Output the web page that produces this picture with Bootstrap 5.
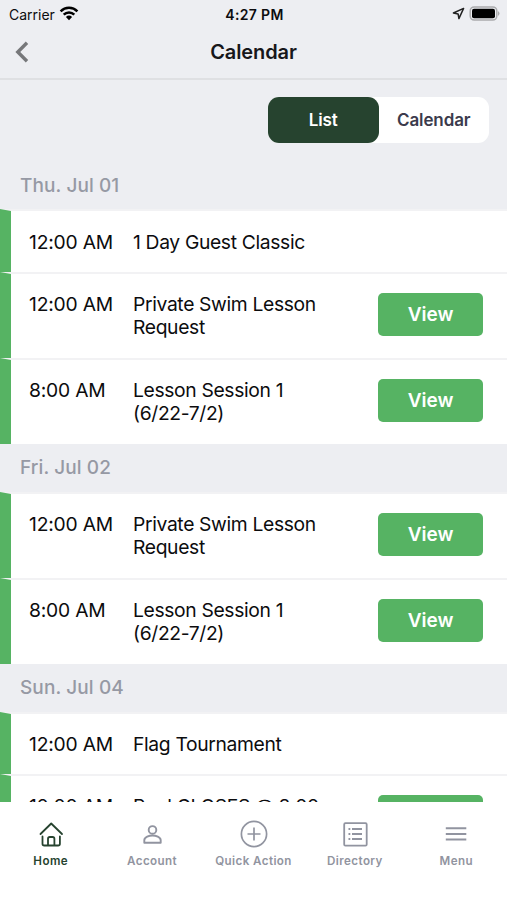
<!DOCTYPE html>
<html lang="en">
<head>
<meta charset="utf-8">
<meta name="viewport" content="width=device-width, initial-scale=1">
<title>Calendar</title>
<link href="https://cdn.jsdelivr.net/npm/bootstrap@5.3.0/dist/css/bootstrap.min.css" rel="stylesheet">
<style>
body{font-family:Inter,"Liberation Sans",sans-serif;background:#edeef2;color:#0c0c0e;height:900px;overflow:hidden}
svg{display:block;fill:none;flex:none}
.status{height:27px;font-size:14px;padding:1px 7px 0 9px}
.status>div{flex:1 1 0}
.status svg{margin-top:-1px}
.clock{font-weight:600;letter-spacing:.35px}
.titlebar{height:53px;border-bottom:2px solid #dfe0e3;padding:0 15px}
.titlebar>div{flex:1 1 0}
.titlebar svg{margin-top:-1px}
.titlebar h1{font-size:20px;font-weight:600;letter-spacing:-.1px;color:#17171a;line-height:48px;padding-bottom:2px}
.switch-wrap{height:80px;padding:17px 18px 0 0}
.switch{width:221px;height:46px;background:#fff;border-radius:11px}
.switch .btn{border:0;border-radius:11px;padding:1px 0 0;font-size:17px;font-weight:600;color:#3b3b4c;letter-spacing:-.1px}
.switch .btn.active{background:#26432f;color:#fff}
.day{height:48px;padding:1px 20px 0;font-size:19px;font-weight:500;color:#9699a4;letter-spacing:.1px}
.day.first{height:49px;padding-top:3px}
.event{height:86px;border-left:11px solid #56b363;border-top:2px solid #f2f2f4;background:#fff;padding:19px 24px 0 18px;font-size:19.3px;line-height:23px;letter-spacing:-.2px}
.event.short{height:62px}
.event.lead-row{height:63px;padding-top:20px}
.event time{width:104px;flex:none}
.event .name{width:205px;letter-spacing:-.35px}
.btn-view{width:105px;height:43px;border-radius:5px;background:#56b363;color:#fff;font-size:19px;font-weight:600;padding:1px 0 0;letter-spacing:0;border:0}
main{height:722px;overflow:hidden}
.tabs{height:98px;background:#fff;padding-top:17px}
.tabs a{flex:1 1 0;color:#9194a0;font-size:11.6px;font-weight:600;letter-spacing:.42px;line-height:16px;text-decoration:none;white-space:nowrap}
.tabs a.active{color:#26432f}
.tabs svg{margin-bottom:4px}
</style>
<script src="https://cdn.jsdelivr.net/npm/bootstrap@5.3.0/dist/js/bootstrap.bundle.min.js"></script>
</head>
<body>
<header>
  <div class="status d-flex align-items-center">
    <div class="d-flex align-items-center"><span class="me-1">Carrier</span>
      <svg width="20" height="15" viewBox="0 0 20 15"><g stroke="#000" stroke-width="2.5"><path d="M1.600 5.300a12 12 0 0 1 16.800 0M4.700 8.700a7.600 7.600 0 0 1 10.600 0"/></g><path fill="#000" d="M6.900 11a4.500 4.500 0 0 1 6.200 0L10 14.200z"/></svg>
    </div>
    <span class="clock">4:27 PM</span>
    <div class="d-flex align-items-center justify-content-end gap-1">
      <svg width="13" height="13" viewBox="0 0 13 13"><path d="M11.600 1.400 1.400 6l4.700.9.8 4.700z" stroke="#222" stroke-width="1.500" stroke-linejoin="round"/></svg>
      <svg width="31" height="15" viewBox="0 0 31 15"><rect x="1.200" y=".9" width="26.600" height="13.200" rx="4" stroke="#aaabad" stroke-width="1.500"/><rect x="3" y="2.700" width="23" height="9.600" rx="2" fill="#000"/><path d="M29 5q3 2.500 0 5z" fill="#aaabad"/></svg>
    </div>
  </div>
  <div class="titlebar d-flex align-items-center">
    <div><svg width="14" height="22" viewBox="0 0 14 22"><path d="m12 1.800-9.200 9.200 9.200 9.200" stroke="#76777a" stroke-width="3.400"/></svg></div>
    <h1 class="m-0">Calendar</h1>
    <div></div>
  </div>
</header>
<main>
  <div class="switch-wrap d-flex justify-content-end">
    <div class="switch d-flex"><button class="btn active w-50">List</button><button class="btn w-50">Calendar</button></div>
  </div>
  <div class="day first d-flex align-items-center">Thu. Jul 01</div>
  <div class="event lead-row d-flex"><time>12:00 AM</time><div class="name">1 Day Guest Classic</div></div>
  <div class="event d-flex"><time>12:00 AM</time><div class="name">Private Swim Lesson Request</div><button class="btn btn-view ms-auto">View</button></div>
  <div class="event d-flex"><time>8:00 AM</time><div class="name">Lesson Session 1 (6/22-7/2)</div><button class="btn btn-view ms-auto">View</button></div>
  <div class="day d-flex align-items-center">Fri. Jul 02</div>
  <div class="event d-flex"><time>12:00 AM</time><div class="name">Private Swim Lesson Request</div><button class="btn btn-view ms-auto">View</button></div>
  <div class="event d-flex"><time>8:00 AM</time><div class="name">Lesson Session 1 (6/22-7/2)</div><button class="btn btn-view ms-auto">View</button></div>
  <div class="day d-flex align-items-center">Sun. Jul 04</div>
  <div class="event short d-flex"><time>12:00 AM</time><div class="name">Flag Tournament</div></div>
  <div class="event d-flex"><time>12:00 AM</time><div class="name">Pool CLOSES @ 8:00</div><button class="btn btn-view ms-auto">View</button></div>
</main>
<nav class="tabs d-flex">
  <a href="#" class="active d-flex flex-column align-items-center"><svg width="30" height="30" viewBox="0 0 30 30" stroke="#26432f" stroke-width="1.800" stroke-linecap="round" stroke-linejoin="round"><path d="M4.500 15 15.200 4.500 26 15M6.500 17.500v7.200q0 1.800 1.800 1.800h13.800q1.800 0 1.800-1.800v-7.200M12 26.300v-6.500q0-1.800 1.800-1.800h2.800q1.800 0 1.800 1.800v6.500"/></svg>Home</a>
  <a href="#" class="d-flex flex-column align-items-center"><svg width="30" height="30" viewBox="0 0 30 30" stroke="#9194a0" stroke-width="1.900"><circle cx="15.500" cy="10.900" r="3.800"/><path stroke-linejoin="round" d="M7.300 23.800v-2.600c0-3.100 5-4.700 8.200-4.700s8.200 1.600 8.200 4.700v2.600z"/></svg>Account</a>
  <a href="#" class="d-flex flex-column align-items-center"><svg width="30" height="30" viewBox="0 0 30 30" stroke="#9194a0" stroke-width="1.700"><circle cx="15" cy="15" r="12.600"/><path d="M15 8.500v13M8.500 15h13"/></svg>Quick Action</a>
  <a href="#" class="d-flex flex-column align-items-center"><svg width="30" height="30" viewBox="0 0 30 30" stroke="#9194a0" stroke-width="1.800"><rect x="4.200" y="4.200" width="22.500" height="22.500" rx="1.200"/><path d="M12 10h10M12 15h10M12 20h10M8.500 10h1.800M8.500 15h1.800M8.500 20h1.800"/></svg>Directory</a>
  <a href="#" class="d-flex flex-column align-items-center"><svg width="30" height="30" viewBox="0 0 30 30" stroke="#9194a0" stroke-width="2"><path d="M4.800 9.300h20.500M4.800 15h20.500M4.800 20.500h20.500"/></svg>Menu</a>
</nav>
</body>
</html>
